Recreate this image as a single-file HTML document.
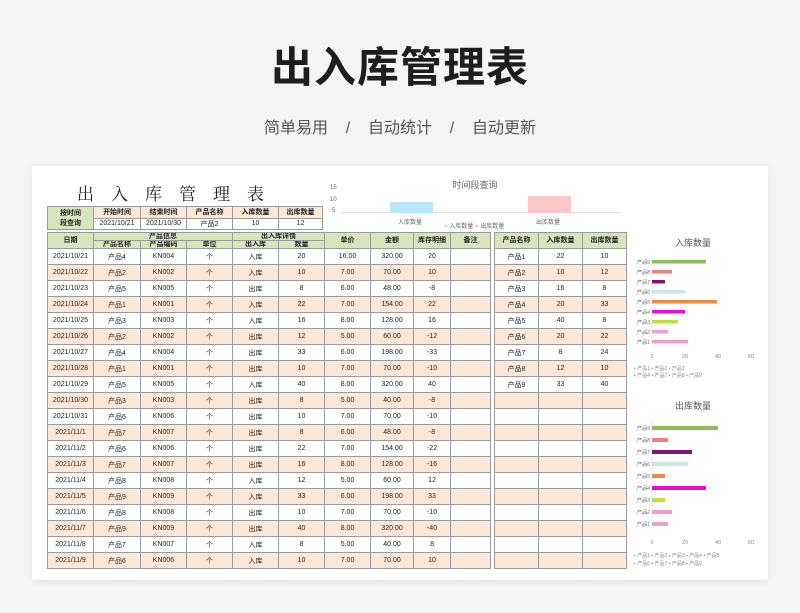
<!DOCTYPE html>
<html><head><meta charset="utf-8"><style>
*{margin:0;padding:0;box-sizing:border-box}
body{width:800px;height:613px;background:#f4f5f7;font-family:"Liberation Sans","Noto Sans CJK SC",sans-serif;position:relative;overflow:hidden}
.t{position:absolute;left:0;width:800px;text-align:center}
.card{position:absolute;left:32px;top:166px;width:736px;height:414px;background:#fff;box-shadow:0 2px 8px rgba(0,0,0,.08);overflow:hidden}
table{border-collapse:collapse;table-layout:fixed;position:absolute}
td{border:1px solid #9a9a9a;text-align:center;font-size:7px;color:#222;height:16px;padding:0;white-space:nowrap;overflow:hidden}
tr.p td{background:#fbe8d8}
.h td{background:#d8e4bc;font-weight:bold;height:8px;font-size:7px;line-height:7px}
.q td{height:11.5px;font-size:7px}
.lab{position:absolute;font-size:6px;color:#666}
</style></head><body>
<div class="t" style="top:34px;font-size:42px;font-weight:bold;color:#1e1e1e;letter-spacing:1px">出入库管理表</div>
<div class="t" style="top:114px;font-size:16px;color:#555;word-spacing:0">简单易用&nbsp;&nbsp;&nbsp;&nbsp;/&nbsp;&nbsp;&nbsp;&nbsp;自动统计&nbsp;&nbsp;&nbsp;&nbsp;/&nbsp;&nbsp;&nbsp;&nbsp;自动更新</div>
<div class="card">
<div style="position:absolute;left:45px;top:14px;font-size:17px;letter-spacing:17px;color:#222;font-family:'Noto Serif CJK SC',serif">出入库管理表</div>
<table style="left:15px;top:40px;width:275px">
<colgroup><col style="width:46px"><col style="width:47px"><col style="width:46px"><col style="width:46px"><col style="width:46px"><col style="width:44px"></colgroup>
<tr class="q"><td rowspan="2" style="background:#d8e4bc;font-weight:bold">按时间<br>段查询</td><td style="background:#fbe8d8;font-weight:bold">开始时间</td><td style="background:#fbe8d8;font-weight:bold">结束时间</td><td style="background:#fbe8d8;font-weight:bold">产品名称</td><td style="background:#fbe8d8;font-weight:bold">入库数量</td><td style="background:#fbe8d8;font-weight:bold">出库数量</td></tr>
<tr class="q"><td>2021/10/21</td><td>2021/10/30</td><td>产品2</td><td>10</td><td>12</td></tr>
</table>
<div style="position:absolute;left:298px;top:12px;width:290px;text-align:center;font-size:9px;color:#666">时间段查询</div>
<div class="lab" style="left:298px;top:19px">15</div><div class="lab" style="left:298px;top:31px">10</div><div class="lab" style="left:300px;top:42px">5</div>
<div style="position:absolute;left:310px;top:46px;width:278px;height:1px;background:#ddd"></div>
<div style="position:absolute;left:358px;top:36px;width:43px;height:11px;background:#b8e6fa"></div>
<div style="position:absolute;left:496px;top:30px;width:43px;height:17px;background:#fcc8c8"></div>
<div class="lab" style="left:366px;top:51px">入库数量</div><div class="lab" style="left:504px;top:51px">出库数量</div>
<div class="lab" style="left:412px;top:55px"><span style="color:#b8e6fa">■</span> 入库数量 <span style="color:#fcc8c8">■</span> 出库数量</div>
<table style="left:15px;top:66px;width:443px">
<colgroup><col style="width:46px"><col style="width:47px"><col style="width:46px"><col style="width:46px"><col style="width:46px"><col style="width:46px"><col style="width:46px"><col style="width:43px"><col style="width:37px"><col style="width:40px"></colgroup>
<tr class="h"><td rowspan="2">日期</td><td colspan="3">产品信息</td><td colspan="2">出入库详情</td><td rowspan="2">单价</td><td rowspan="2">金额</td><td rowspan="2">库存明细</td><td rowspan="2">备注</td></tr>
<tr class="h"><td>产品名称</td><td>产品编码</td><td>单位</td><td>出入库</td><td>数量</td></tr>
<tr><td>2021/10/21</td><td>产品4</td><td>KN004</td><td>个</td><td>入库</td><td>20</td><td>16.00</td><td>320.00</td><td>20</td><td></td></tr>
<tr class="p"><td>2021/10/22</td><td>产品2</td><td>KN002</td><td>个</td><td>入库</td><td>10</td><td>7.00</td><td>70.00</td><td>10</td><td></td></tr>
<tr><td>2021/10/23</td><td>产品5</td><td>KN005</td><td>个</td><td>出库</td><td>8</td><td>6.00</td><td>48.00</td><td>-8</td><td></td></tr>
<tr class="p"><td>2021/10/24</td><td>产品1</td><td>KN001</td><td>个</td><td>入库</td><td>22</td><td>7.00</td><td>154.00</td><td>22</td><td></td></tr>
<tr><td>2021/10/25</td><td>产品3</td><td>KN003</td><td>个</td><td>入库</td><td>16</td><td>8.00</td><td>128.00</td><td>16</td><td></td></tr>
<tr class="p"><td>2021/10/26</td><td>产品2</td><td>KN002</td><td>个</td><td>出库</td><td>12</td><td>5.00</td><td>60.00</td><td>-12</td><td></td></tr>
<tr><td>2021/10/27</td><td>产品4</td><td>KN004</td><td>个</td><td>出库</td><td>33</td><td>6.00</td><td>198.00</td><td>-33</td><td></td></tr>
<tr class="p"><td>2021/10/28</td><td>产品1</td><td>KN001</td><td>个</td><td>出库</td><td>10</td><td>7.00</td><td>70.00</td><td>-10</td><td></td></tr>
<tr><td>2021/10/29</td><td>产品5</td><td>KN005</td><td>个</td><td>入库</td><td>40</td><td>8.00</td><td>320.00</td><td>40</td><td></td></tr>
<tr class="p"><td>2021/10/30</td><td>产品3</td><td>KN003</td><td>个</td><td>出库</td><td>8</td><td>5.00</td><td>40.00</td><td>-8</td><td></td></tr>
<tr><td>2021/10/31</td><td>产品6</td><td>KN006</td><td>个</td><td>出库</td><td>10</td><td>7.00</td><td>70.00</td><td>-10</td><td></td></tr>
<tr class="p"><td>2021/11/1</td><td>产品7</td><td>KN007</td><td>个</td><td>出库</td><td>8</td><td>6.00</td><td>48.00</td><td>-8</td><td></td></tr>
<tr><td>2021/11/2</td><td>产品6</td><td>KN006</td><td>个</td><td>出库</td><td>22</td><td>7.00</td><td>154.00</td><td>-22</td><td></td></tr>
<tr class="p"><td>2021/11/3</td><td>产品7</td><td>KN007</td><td>个</td><td>出库</td><td>16</td><td>8.00</td><td>128.00</td><td>-16</td><td></td></tr>
<tr><td>2021/11/4</td><td>产品8</td><td>KN008</td><td>个</td><td>入库</td><td>12</td><td>5.00</td><td>60.00</td><td>12</td><td></td></tr>
<tr class="p"><td>2021/11/5</td><td>产品9</td><td>KN009</td><td>个</td><td>入库</td><td>33</td><td>6.00</td><td>198.00</td><td>33</td><td></td></tr>
<tr><td>2021/11/6</td><td>产品8</td><td>KN008</td><td>个</td><td>出库</td><td>10</td><td>7.00</td><td>70.00</td><td>-10</td><td></td></tr>
<tr class="p"><td>2021/11/7</td><td>产品9</td><td>KN009</td><td>个</td><td>出库</td><td>40</td><td>8.00</td><td>320.00</td><td>-40</td><td></td></tr>
<tr><td>2021/11/8</td><td>产品7</td><td>KN007</td><td>个</td><td>入库</td><td>8</td><td>5.00</td><td>40.00</td><td>8</td><td></td></tr>
<tr class="p"><td>2021/11/9</td><td>产品6</td><td>KN006</td><td>个</td><td>入库</td><td>10</td><td>7.00</td><td>70.00</td><td>10</td><td></td></tr>
</table>
<table style="left:462px;top:66px;width:132px">
<colgroup><col style="width:44px"><col style="width:44px"><col style="width:44px"></colgroup>
<tr class="h"><td style="height:16px">产品名称</td><td>入库数量</td><td>出库数量</td></tr>
<tr><td>产品1</td><td>22</td><td>10</td></tr>
<tr class="p"><td>产品2</td><td>10</td><td>12</td></tr>
<tr><td>产品3</td><td>16</td><td>8</td></tr>
<tr class="p"><td>产品4</td><td>20</td><td>33</td></tr>
<tr><td>产品5</td><td>40</td><td>8</td></tr>
<tr class="p"><td>产品6</td><td>20</td><td>22</td></tr>
<tr><td>产品7</td><td>8</td><td>24</td></tr>
<tr class="p"><td>产品8</td><td>12</td><td>10</td></tr>
<tr><td>产品9</td><td>33</td><td>40</td></tr>
<tr class="p"><td></td><td></td><td></td></tr><tr><td></td><td></td><td></td></tr>
<tr class="p"><td></td><td></td><td></td></tr><tr><td></td><td></td><td></td></tr>
<tr class="p"><td></td><td></td><td></td></tr><tr><td></td><td></td><td></td></tr>
<tr class="p"><td></td><td></td><td></td></tr><tr><td></td><td></td><td></td></tr>
<tr class="p"><td></td><td></td><td></td></tr><tr><td></td><td></td><td></td></tr>
<tr class="p"><td></td><td></td><td></td></tr>
</table>
<svg style="position:absolute;left:598px;top:60px" width="138" height="354" font-family="Liberation Sans,Noto Sans CJK SC,sans-serif">
<text x="63" y="20" font-size="9" fill="#555" text-anchor="middle">入库数量</text>
<line x1="22" y1="30" x2="22" y2="118" stroke="#ddd" stroke-width="0.6"/>
<g font-size="5.5" fill="#777" text-anchor="end" font-style="italic">
<text x="20" y="38">产品9</text><text x="20" y="48">产品8</text><text x="20" y="58">产品7</text><text x="20" y="68">产品6</text><text x="20" y="78">产品5</text><text x="20" y="88">产品4</text><text x="20" y="98">产品3</text><text x="20" y="108">产品2</text><text x="20" y="118">产品1</text></g>
<rect x="22" y="34" width="54" height="3.5" fill="#8bbc5a"/><rect x="22" y="44" width="20" height="3.5" fill="#e88080"/><rect x="22" y="54" width="13" height="3.5" fill="#7b1577"/><rect x="22" y="64" width="33" height="3.5" fill="#c8e6ea"/><rect x="22" y="74" width="65" height="3.5" fill="#ee8a40"/><rect x="22" y="84" width="33" height="3.5" fill="#e010d8"/><rect x="22" y="94" width="26" height="3.5" fill="#c0e040"/><rect x="22" y="104" width="16" height="3.5" fill="#f0a0c8"/><rect x="22" y="114" width="36" height="3.5" fill="#f0a0c8"/>
<g font-size="5.5" fill="#888" text-anchor="middle"><text x="22" y="132">0</text><text x="55" y="132">20</text><text x="88" y="132">40</text><text x="121" y="132">60</text></g>
<g font-size="5" fill="#888"><text x="4" y="144">▪ 产品1 ▪ 产品2 ▪ 产品3</text><text x="4" y="151">▪ 产品4 ▪ 产品7 ▪ 产品8 ▪ 产品9</text></g>
<text x="63" y="183" font-size="9" fill="#555" text-anchor="middle">出库数量</text>
<line x1="22" y1="195" x2="22" y2="300" stroke="#ddd" stroke-width="0.6"/>
<g font-size="5.5" fill="#777" text-anchor="end" font-style="italic">
<text x="20" y="204">产品9</text><text x="20" y="216">产品8</text><text x="20" y="228">产品7</text><text x="20" y="240">产品6</text><text x="20" y="252">产品5</text><text x="20" y="264">产品4</text><text x="20" y="276">产品3</text><text x="20" y="288">产品2</text><text x="20" y="300">产品1</text></g>
<rect x="22" y="200" width="66" height="4" fill="#8bbc5a"/><rect x="22" y="212" width="16" height="4" fill="#e88080"/><rect x="22" y="224" width="40" height="4" fill="#7b1577"/><rect x="22" y="236" width="36" height="4" fill="#c8e6ea"/><rect x="22" y="248" width="13" height="4" fill="#ee8a40"/><rect x="22" y="260" width="54" height="4" fill="#e010d8"/><rect x="22" y="272" width="13" height="4" fill="#c0e040"/><rect x="22" y="284" width="20" height="4" fill="#f0a0c8"/><rect x="22" y="296" width="16" height="4" fill="#f0a0c8"/>
<g font-size="5.5" fill="#888" text-anchor="middle"><text x="22" y="318">0</text><text x="55" y="318">20</text><text x="88" y="318">40</text><text x="121" y="318">60</text></g>
<g font-size="5" fill="#888"><text x="4" y="331">▪ 产品1 ▪ 产品2 ▪ 产品3 ▪ 产品4 ▪ 产品5</text><text x="4" y="339">▪ 产品6 ▪ 产品7 ▪ 产品8 ▪ 产品9</text></g>
</svg>
</div>
</body></html>
